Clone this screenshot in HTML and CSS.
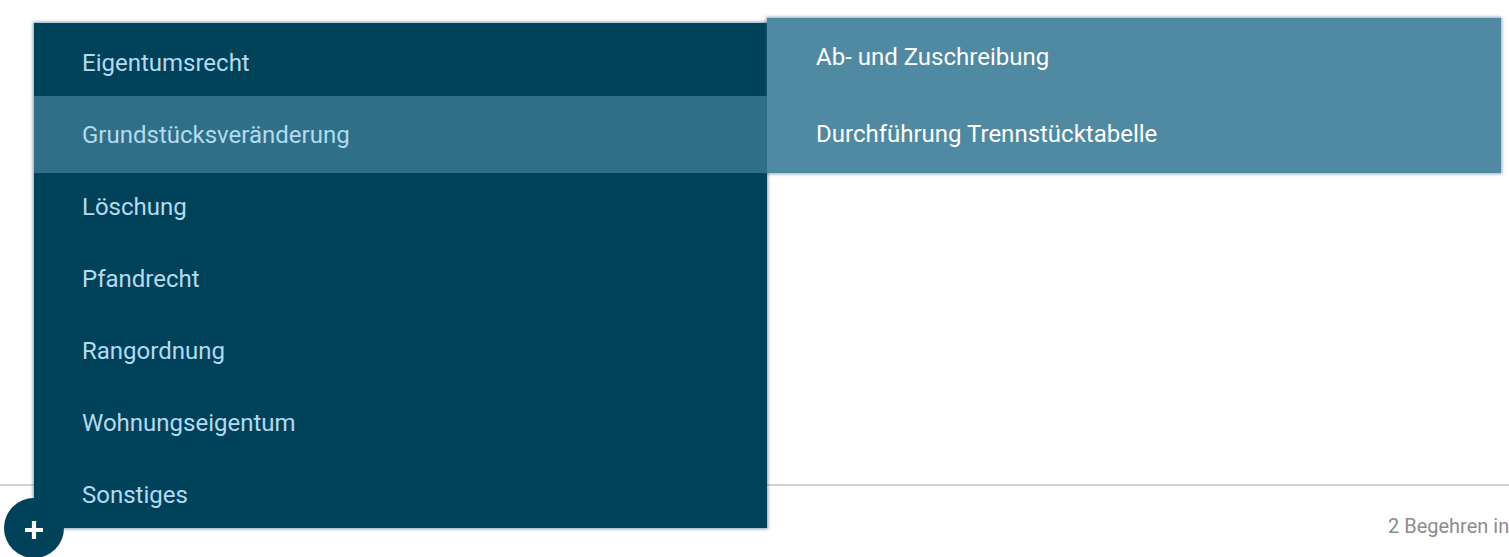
FILE: index.html
```html
<!DOCTYPE html>
<html lang="de">
<head>
<meta charset="utf-8">
<title>Begehren</title>
<link rel="stylesheet" href="styles.css">
</head>
<body>
<div class="page">
  <main class="content"></main>
  <footer class="footer">
    <div class="fab-cell">
      <button class="fab" aria-label="Neu">
        <svg width="20" height="20" viewBox="0 0 20 20" aria-hidden="true">
          <path d="M10 1v18M1 10h18" stroke="#fff" stroke-width="4.2" fill="none"/>
        </svg>
      </button>
    </div>
    <div class="status">2 Begehren in Bearbeitung</div>
  </footer>

  <nav class="menu main-menu">
    <div class="item">Eigentumsrecht</div>
    <div class="item active">Grundstücksveränderung</div>
    <div class="item">Löschung</div>
    <div class="item">Pfandrecht</div>
    <div class="item">Rangordnung</div>
    <div class="item">Wohnungseigentum</div>
    <div class="item">Sonstiges</div>
  </nav>

  <nav class="menu sub-menu">
    <div class="sub-item first">Ab- und Zuschreibung</div>
    <div class="sub-item second">Durchführung Trennstücktabelle</div>
  </nav>
</div>
</body>
</html>
```

FILE: styles.css
```css
* { box-sizing: border-box; }

html, body {
  margin: 0;
  padding: 0;
  height: 557px;
  overflow: hidden;
  background: #ffffff;
  font-family: Roboto, "Liberation Sans", Arial, sans-serif;
}

.page {
  position: relative;
  height: 557px;
  display: flex;
  flex-direction: column;
}

.content {
  height: 484px;
  flex: none;
}

.footer {
  flex: 1;
  border-top: 2px solid #d3d3d3;
  display: grid;
  grid-template-columns: 1388px auto;
  align-items: start;
}

.fab-cell {
  padding: 12px 0 0 4px;
  position: relative;
  z-index: 5;
}

.fab {
  width: 60px;
  height: 60px;
  border-radius: 50%;
  border: none;
  padding: 0;
  background: #01425b;
  display: flex;
  align-items: center;
  justify-content: center;
}

.fab svg { display: block; margin-top: 3px; }

.status {
  white-space: nowrap;
  color: #8c8c8c;
  font-size: 20px;
  padding-top: 28px;
}

.menu {
  position: absolute;
  font-size: 24px;
}

.main-menu {
  left: 34px;
  top: 23px;
  width: 733px;
  height: 505px;
  overflow: hidden;
  background: #01425b;
  padding-top: 4px;
  box-shadow: 0 0 3px 1px rgba(30, 80, 110, 0.55);
  z-index: 2;
}

.item {
  height: 72px;
  line-height: 72px;
  padding: 0 48px;
  color: #b4daef;
  white-space: nowrap;
}

.item.active {
  background: #2f7088;
  margin: -3px 0 -2px;
  height: 77px;
  padding: 3px 48px 2px;
}

.sub-menu {
  left: 767px;
  top: 18px;
  width: 734px;
  height: 155px;
  overflow: hidden;
  background: #4f89a2;
  box-shadow: 0 0 3px 1px rgba(50, 100, 130, 0.55);
  z-index: 3;
}

.sub-item {
  padding: 0 49px;
  color: #ffffff;
  white-space: nowrap;
}

.sub-item.first { height: 78px; line-height: 78px; }
.sub-item.second { height: 77px; line-height: 77px; }
```
